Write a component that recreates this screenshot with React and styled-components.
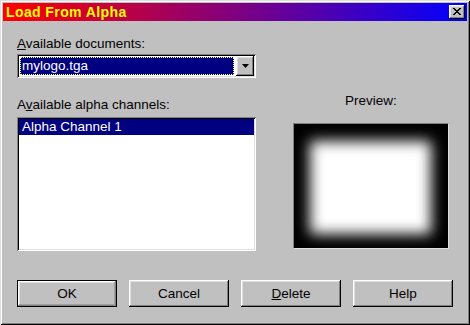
import React from "react";
import styled, { createGlobalStyle } from "styled-components";

const GlobalStyle = createGlobalStyle`
  html, body {
    margin: 0;
    padding: 0;
    background: #c0c0c0;
  }
  * {
    box-sizing: border-box;
  }
`;

const raised = `
  box-shadow: inset -1px -1px #000, inset 1px 1px #fff,
    inset -2px -2px #808080, inset 2px 2px #dfdfdf;
`;

const sunken = `
  box-shadow: inset 1px 1px #808080, inset -1px -1px #fff,
    inset 2px 2px #000, inset -2px -2px #dfdfdf;
`;

const Window = styled.div`
  width: 470px;
  height: 325px;
  padding: 3px;
  background: #c0c0c0;
  box-shadow: inset 1px 1px #dfdfdf, inset -1px -1px #000,
    inset 2px 2px #fff, inset -2px -2px #808080;
  font-family: "Liberation Sans", Arial, sans-serif;
  font-size: 13.5px;
  color: #000;
  display: flex;
  flex-direction: column;
`;

const TitleBar = styled.div`
  height: 18px;
  display: flex;
  align-items: center;
  justify-content: space-between;
  padding: 0 2px 0 3px;
  background: linear-gradient(to right, #ff0000 0%, #800080 50%, #0000ff 100%);
`;

const Title = styled.span`
  color: #ffff00;
  font-weight: bold;
  font-size: 14px;
  letter-spacing: 0.4px;
  line-height: 18px;
`;

const CloseButton = styled.div`
  width: 16px;
  height: 14px;
  background: #c0c0c0;
  ${raised}
  display: flex;
  align-items: center;
  justify-content: center;
  padding-bottom: 1px;
`;

const Body = styled.div`
  flex: 1;
  display: flex;
  flex-direction: column;
  padding: 15px 0 0 14px;
`;

const Columns = styled.div`
  display: flex;
  gap: 37px;
`;

const LeftColumn = styled.div`
  width: 239px;
  display: flex;
  flex-direction: column;
`;

const RightColumn = styled.div`
  width: 156px;
  display: flex;
  flex-direction: column;
  align-items: center;
  padding-top: 57px;
`;

const Label = styled.div`
  line-height: 15px;
  margin-top: ${(p) => p.$top || 0}px;
  margin-bottom: ${(p) => p.$bottom || 0}px;
`;

const Combo = styled.div`
  height: 24px;
  background: #fff;
  ${sunken}
  padding: 2px;
  display: flex;
  gap: 1px;
`;

const ComboValue = styled.div`
  flex: 1;
  margin: 1px;
  padding-left: 2px;
  background: #000080;
  color: #fff;
  outline: 1px dotted #ffff80;
  outline-offset: -1px;
  line-height: 18px;
`;

const DropButton = styled.div`
  width: 18px;
  background: #c0c0c0;
  ${raised}
  display: flex;
  align-items: center;
  justify-content: center;
`;

const ListBox = styled.div`
  height: 134px;
  background: #fff;
  ${sunken}
  padding: 2px;
`;

const ListItem = styled.div`
  height: 16px;
  line-height: 16px;
  padding-left: 3px;
  background: ${(p) => (p.$selected ? "#000080" : "transparent")};
  color: ${(p) => (p.$selected ? "#fff" : "#000")};
`;

const PreviewBox = styled.div`
  width: 156px;
  height: 126px;
  margin-top: 15px;
  background: #000;
  border: 1px solid #808080;
  border-right-color: #dfdfdf;
  border-bottom-color: #dfdfdf;
  overflow: hidden;
  display: flex;
`;

const PreviewGlow = styled.div`
  flex: 1;
  margin: 17px 17px 14px 16px;
  background: #fff;
  filter: blur(7px);
`;

const ButtonRow = styled.div`
  display: flex;
  gap: 12px;
  margin-top: 29px;
`;

const Button = styled.div`
  width: 100px;
  height: 27px;
  background: #c0c0c0;
  display: flex;
  align-items: center;
  justify-content: center;
  line-height: 15px;
  ${(p) =>
    p.$default
      ? `border: 1px solid #000;
         box-shadow: inset -1px -1px #808080, inset 1px 1px #fff,
           inset -2px -2px #a0a0a0, inset 2px 2px #dfdfdf;`
      : raised}
`;

export default function App() {
  return (
    <>
      <GlobalStyle />
      <Window>
        <TitleBar>
          <Title>Load From Alpha</Title>
          <CloseButton>
            <svg width="8" height="7" viewBox="0 0 8 7">
              <path d="M0 0L7 7M1 0L8 7M7 0L0 7M8 0L1 7" stroke="#000" strokeWidth="1" />
            </svg>
          </CloseButton>
        </TitleBar>
        <Body>
          <Columns>
            <LeftColumn>
              <Label $bottom={3}>
                <u>A</u>vailable documents:
              </Label>
              <Combo>
                <ComboValue>mylogo.tga</ComboValue>
                <DropButton>
                  <svg width="7" height="4" viewBox="0 0 7 4">
                    <path d="M0 0H7L3.5 4Z" fill="#000" />
                  </svg>
                </DropButton>
              </Combo>
              <Label $top={19} $bottom={5}>
                A<u>v</u>ailable alpha channels:
              </Label>
              <ListBox>
                <ListItem $selected>Alpha Channel 1</ListItem>
              </ListBox>
            </LeftColumn>
            <RightColumn>
              <Label>Preview:</Label>
              <PreviewBox>
                <PreviewGlow />
              </PreviewBox>
            </RightColumn>
          </Columns>
          <ButtonRow>
            <Button $default>OK</Button>
            <Button>Cancel</Button>
            <Button>
              <u>D</u>elete
            </Button>
            <Button>Help</Button>
          </ButtonRow>
        </Body>
      </Window>
    </>
  );
}
